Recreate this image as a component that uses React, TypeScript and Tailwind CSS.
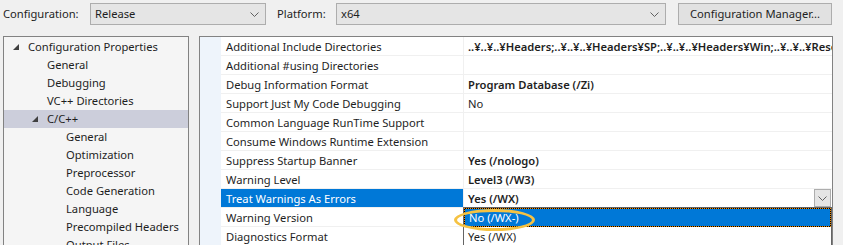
const tree = [
  { label: "Configuration Properties", pad: 28, caret: 13 },
  { label: "General", pad: 47 },
  { label: "Debugging", pad: 47 },
  { label: "VC++ Directories", pad: 47 },
  { label: "C/C++", pad: 47, caret: 32, selected: true },
  { label: "General", pad: 66 },
  { label: "Optimization", pad: 66 },
  { label: "Preprocessor", pad: 66 },
  { label: "Code Generation", pad: 66 },
  { label: "Language", pad: 66 },
  { label: "Precompiled Headers", pad: 66 },
  { label: "Output Files", pad: 66 },
];

const rows = [
  {
    name: "Additional Include Directories",
    value: "..¥..¥..¥Headers;..¥..¥..¥Headers¥SP;..¥..¥..¥Headers¥Win;..¥..¥..¥Resources",
    bold: true,
  },
  { name: "Additional #using Directories", value: "" },
  { name: "Debug Information Format", value: "Program Database (/Zi)", bold: true },
  { name: "Support Just My Code Debugging", value: "No" },
  { name: "Common Language RunTime Support", value: "" },
  { name: "Consume Windows Runtime Extension", value: "" },
  { name: "Suppress Startup Banner", value: "Yes (/nologo)", bold: true },
  { name: "Warning Level", value: "Level3 (/W3)", bold: true },
  { name: "Treat Warnings As Errors", value: "Yes (/WX)", bold: true, editing: true },
  { name: "Warning Version", value: "" },
  { name: "Diagnostics Format", value: "" },
];

const Chevron = () => (
  <svg width="9" height="5" viewBox="0 0 9 5" className="shrink-0">
    <path d="M0.5 0.5 L4.5 4.5 L8.5 0.5" fill="none" stroke="#606060" strokeWidth="1" />
  </svg>
);

const Caret = () => (
  <svg width="6" height="6" viewBox="0 0 6 6">
    <polygon points="6,0 6,6 0,6" fill="#404040" />
  </svg>
);

export default function App() {
  return (
    <div className="relative w-[843px] h-[245px] overflow-hidden bg-[#f0f0f0] font-['Noto_Sans',sans-serif] text-[11.2px] text-[#1e1e1e]">
      {/* toolbar */}
      <div className="flex items-center h-[22px] mt-[3px]">
        <span className="ml-[3px] w-[87px]">Configuration:</span>
        <div className="w-[176px] h-[22px] flex items-center justify-between pl-[4px] pr-[6px] bg-[#e5e5e5] border border-[#adadad]">
          <span>Release</span>
          <Chevron />
        </div>
        <span className="ml-[11px] w-[59px]">Platform:</span>
        <div className="w-[330px] h-[22px] flex items-center justify-between pl-[4px] pr-[6px] bg-[#e5e5e5] border border-[#adadad]">
          <span>x64</span>
          <Chevron />
        </div>
        <div className="ml-[12px] w-[154px] h-[22px] flex items-center justify-center bg-[#e1e1e1] border border-[#adadad]">
          Configuration Manager...
        </div>
      </div>

      <div className="flex mt-[11px]">
        {/* tree */}
        <div className="ml-[3px] w-[186px] h-[240px] border border-[#828282] bg-[#f5f5f5] pt-[1px]">
          {tree.map((t, i) => (
            <div
              key={i}
              className={`relative h-[18px] leading-[18px] whitespace-nowrap ${t.selected ? "bg-[#cccedb]" : ""}`}
              style={{ paddingLeft: t.pad - 4 }}
            >
              {t.caret !== undefined && (
                <span className="absolute top-[6px]" style={{ left: t.caret - 4 }}>
                  <Caret />
                </span>
              )}
              {t.label}
            </div>
          ))}
        </div>

        {/* property grid */}
        <div className="ml-[10px] w-[634px] h-[240px] border border-[#828282] bg-white flex">
          <div className="w-[21px] bg-[#eef4fb]" />
          <div className="flex-1 min-w-0">
            {rows.map((r, i) => (
              <div key={i} className="flex h-[19px] border-b border-[#f0f0f0]">
                <div
                  className={`w-[243px] shrink-0 pl-[5px] leading-[19px] whitespace-nowrap border-r border-[#f0f0f0] ${
                    r.editing ? "bg-[#0078d7] text-white" : ""
                  }`}
                >
                  {r.name}
                </div>
                <div className="relative flex-1 min-w-0 flex items-center">
                  <span className={`pl-[4px] leading-[19px] whitespace-nowrap overflow-hidden flex-1 ${r.bold ? "font-semibold" : ""}`}>
                    {r.value}
                  </span>
                  {r.editing && (
                    <>
                      <div className="w-[17px] h-[18px] mr-[1px] flex items-center justify-center bg-[#e5e5e5] border border-[#adadad]">
                        <Chevron />
                      </div>
                      <div className="absolute left-[-1px] right-0 top-[18px] z-10 bg-white border border-[#646464]">
                        <div className="h-[19px] leading-[17px] pl-[4px] bg-[#0078d7] text-white border border-black outline outline-1 outline-dotted outline-[#f08a00] outline-offset-[-1px]">
                          No (/WX-)
                        </div>
                        <div className="h-[19px] leading-[19px] pl-[4px]">Yes (/WX)</div>
                      </div>
                    </>
                  )}
                </div>
              </div>
            ))}
          </div>
        </div>
      </div>

      {/* annotation */}
      <div className="absolute left-[454px] top-[209px] w-[81px] h-[22px] rounded-[50%] border-[3px] border-[#f5c242] z-20" />
    </div>
  );
}
